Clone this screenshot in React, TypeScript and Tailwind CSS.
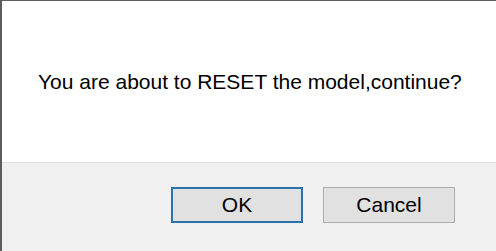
import React from 'react';

const App: React.FC = () => {
  return (
    <div
      className="flex h-[251px] w-[496px] flex-col border-l-2 border-t border-[#5c5c5c] bg-white"
      style={{ fontFamily: '"Liberation Sans", Arial, sans-serif' }}
    >
      <div className="h-[161px] shrink-0 pl-[36px] pt-[69px]">
        <p className="text-[21px] leading-[24px] text-black">
          You are about to RESET the model,continue?
        </p>
      </div>
      <div className="flex flex-1 items-start justify-end gap-[20px] border-t border-[#dfdfdf] bg-[#f0f0f0] pr-[41px] pt-[24px]">
        <button className="flex h-[36px] w-[132px] items-center justify-center border-2 border-[#2b72a8] bg-[#e1e1e1] text-[21px] text-black">
          OK
        </button>
        <button className="flex h-[36px] w-[132px] items-center justify-center border border-[#adadad] bg-[#e1e1e1] text-[21px] text-black">
          Cancel
        </button>
      </div>
    </div>
  );
};

export default App;
